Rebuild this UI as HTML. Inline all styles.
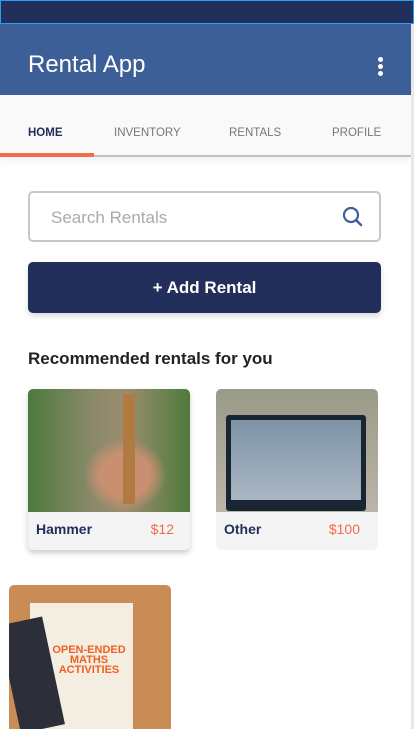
<!DOCTYPE html>
<html><head><style>
*{margin:0;padding:0;box-sizing:border-box}
body{width:414px;height:729px;overflow:hidden;background:#fff;font-family:"Liberation Sans",sans-serif;position:relative}
.abs{position:absolute}
</style></head><body>
<div class="abs" style="left:0;top:0;width:414px;height:24px;background:#222f5a;border:1px solid #2a9df4"></div>
<div class="abs" style="left:0;top:24px;width:411px;height:71px;background:#3d5f97"></div>
<div class="abs" style="left:28px;top:51px;color:#fff;font-size:24px">Rental App</div>
<div class="abs" style="left:378px;top:57px;width:5px;height:5px;border-radius:50%;background:#fff;box-shadow:0 7px 0 #fff,0 14px 0 #fff"></div>
<div class="abs" style="left:0;top:95px;width:411px;height:62px;background:#f9f9f9;box-shadow:0 4px 8px rgba(100,130,200,0.12)"></div>
<div class="abs" style="top:127px;left:28px;font-size:11.5px;font-weight:bold;color:#222f5a">HOME</div>
<div class="abs" style="top:127px;left:114px;font-size:11.5px;color:#777">INVENTORY</div>
<div class="abs" style="top:127px;left:229px;font-size:11.5px;color:#777">RENTALS</div>
<div class="abs" style="top:127px;left:332px;font-size:11.5px;color:#777">PROFILE</div>
<div class="abs" style="left:0;top:155px;width:411px;height:2px;background:#c0c0c0"></div>
<div class="abs" style="left:0;top:153px;width:94px;height:4px;background:#f26b4b"></div>
<div class="abs" style="left:411px;top:24px;width:3px;height:705px;background:#e8e8e8"></div>
<div class="abs" style="left:28px;top:191px;width:353px;height:51px;border:2px solid #c5c8d0;border-radius:5px;background:#fff"></div>
<div class="abs" style="left:51px;top:208px;font-size:17px;color:#aaa">Search Rentals</div>
<svg class="abs" style="left:341px;top:206px" width="22" height="22" viewBox="0 0 22 22"><circle cx="10" cy="9" r="7" fill="none" stroke="#3d5f97" stroke-width="2.2"/><line x1="15" y1="14" x2="20" y2="19" stroke="#3d5f97" stroke-width="2.4" stroke-linecap="round"/></svg>
<div class="abs" style="left:28px;top:262px;width:353px;height:51px;background:#222f5a;border-radius:5px;box-shadow:0 3px 6px rgba(0,0,0,0.15);color:#fff;font-size:17px;font-weight:bold;text-align:center;line-height:51px">+ Add Rental</div>
<div class="abs" style="left:28px;top:349px;font-size:17px;font-weight:bold;color:#222">Recommended rentals for you</div>
<div class="abs" style="left:28px;top:389px;width:162px;height:161px;border-radius:5px;background:#f4f4f4;box-shadow:0 3px 6px rgba(0,0,0,0.2);overflow:hidden">
<div style="height:123px;background:radial-gradient(ellipse at 60% 70%,#c89070 0 18%,transparent 30%),linear-gradient(90deg,#4d7a3e,#8a8a6a 40%,#9b8d70 60%,#4f7a3d)"></div>
<div style="position:absolute;left:95px;top:5px;width:12px;height:110px;background:#b07a40"></div>
<div style="position:absolute;left:8px;top:132px;font-size:14px;font-weight:bold;color:#222f5a">Hammer</div>
<div style="position:absolute;right:16px;top:132px;font-size:14px;color:#f26b4b">$12</div></div>
<div class="abs" style="left:216px;top:389px;width:162px;height:161px;border-radius:5px;background:#f4f4f4;overflow:hidden">
<div style="height:123px;background:linear-gradient(#9a9a88,#b9b5a8)"></div>
<div style="position:absolute;left:10px;top:26px;width:140px;height:96px;background:#1a2533;border-radius:3px"></div>
<div style="position:absolute;left:15px;top:31px;width:130px;height:80px;background:linear-gradient(#7e93a8,#a9b6c2)"></div>
<div style="position:absolute;left:8px;top:132px;font-size:14px;font-weight:bold;color:#222f5a">Other</div>
<div style="position:absolute;right:18px;top:132px;font-size:14px;color:#f26b4b">$100</div></div>
<div class="abs" style="left:9px;top:585px;width:162px;height:144px;border-radius:5px 5px 0 0;background:#c98c55;overflow:hidden">
<div style="position:absolute;left:21px;top:18px;width:103px;height:130px;background:#f3ede2"></div>
<div style="position:absolute;left:0;top:35px;width:45px;height:110px;background:#2c2f3a;transform:rotate(-12deg)"></div>
<div style="position:absolute;left:40px;top:60px;width:80px;font-size:11px;font-weight:bold;color:#f06020;text-align:center;line-height:10px">OPEN-ENDED MATHS ACTIVITIES</div></div>
</body></html>
